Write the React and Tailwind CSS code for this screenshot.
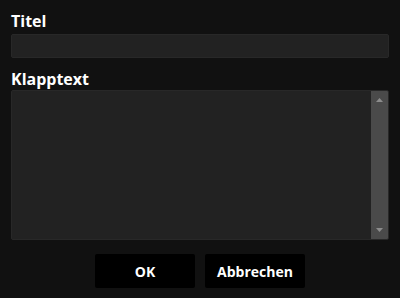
import React, { useState } from 'react';

export default function App() {
  const [title, setTitle] = useState('');
  const [text, setText] = useState('');

  return (
    <div
      className="w-[400px] h-[298px] bg-[#111111] px-[11px] pt-[10px] text-white overflow-hidden"
      style={{ fontFamily: '"Open Sans", "Liberation Sans", sans-serif' }}
    >
      <label className="block text-[16px] leading-[22px] font-bold">Titel</label>
      <input
        value={title}
        onChange={(e) => setTitle(e.target.value)}
        className="mt-[2px] block w-full h-[24px] bg-[#222222] border border-[#282828] rounded-[2px] px-2 text-sm text-white outline-none"
      />

      <label className="block mt-[10px] text-[16px] leading-[22px] font-bold">Klapptext</label>
      <div className="flex h-[150px] bg-[#222222] border border-[#282828] rounded-[2px] overflow-hidden">
        <textarea
          value={text}
          onChange={(e) => setText(e.target.value)}
          className="flex-1 h-full bg-transparent resize-none outline-none px-2 py-1 text-sm text-white"
        />
        {/* scrollbar */}
        <div className="w-[17px] h-full bg-[#4a4a4a] flex flex-col items-center justify-between py-[7px]">
          <svg width="7" height="4" viewBox="0 0 7 4">
            <path d="M3.5 0 L7 4 L0 4 Z" fill="#8c8c8c" />
          </svg>
          <svg width="7" height="4" viewBox="0 0 7 4">
            <path d="M0 0 L7 0 L3.5 4 Z" fill="#8c8c8c" />
          </svg>
        </div>
      </div>

      <div className="mt-[14px] flex justify-center gap-[10px]">
        <button className="w-[100px] h-[34px] bg-black rounded-[2px] text-[14px] font-bold text-white">
          OK
        </button>
        <button className="w-[100px] h-[34px] bg-black rounded-[2px] text-[14px] font-bold text-white">
          Abbrechen
        </button>
      </div>
    </div>
  );
}
